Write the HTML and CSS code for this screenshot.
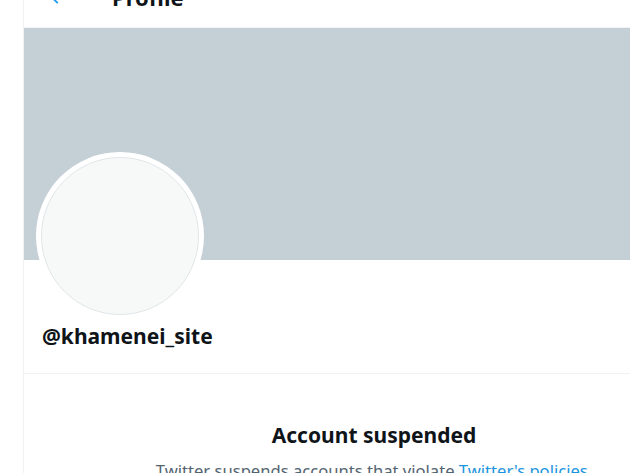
FILE: index.html
```html
<!DOCTYPE html>
<html>
<head>
<meta charset="utf-8">
<link rel="stylesheet" href="styles.css">
</head>
<body>
<div class="page">
  <div class="gutter"></div>
  <main class="column">
    <header class="header">
      <div class="header-inner">
        <div class="back">
          <svg viewBox="0 0 24 24" width="22" height="22"><path fill="#1d9bf0" d="M7.414 13l5.043 5.04-1.414 1.42L3.586 12l7.457-7.46 1.414 1.42L7.414 11H21v2H7.414z"/></svg>
        </div>
        <h2 class="title">Profile</h2>
      </div>
    </header>
    <div class="banner"></div>
    <div class="profile">
      <div class="avatar"><div class="avatar-img"></div></div>
      <div class="handle">@khamenei_site</div>
    </div>
    <section class="empty">
      <h1 class="empty-title">Account suspended</h1>
      <p class="empty-text">Twitter suspends accounts that violate <a href="#">Twitter's policies</a>. <a href="#">Learn more</a></p>
    </section>
  </main>
</div>
</body>
</html>
```
FILE: styles.css
```css
html, body {
  margin: 0;
  padding: 0;
  overflow: hidden;
  background: #ffffff;
}
body {
  font-family: "Noto Sans", "Open Sans", sans-serif;
  color: #0f1419;
}
.page {
  display: flex;
  width: 630px;
  height: 473px;
  overflow: hidden;
}
.gutter {
  flex: 0 0 23px;
}
.column {
  flex: 0 0 700px;
  border-left: 1px solid #eff3f4;
}
.header {
  height: 27px;
  border-bottom: 1px solid #eff3f4;
  overflow: hidden;
}
.header-inner {
  display: flex;
  align-items: center;
  height: 53px;
  margin-top: -30px;
  padding-left: 16px;
}
.back {
  width: 56px;
  display: flex;
  align-items: center;
  padding-left: 7px;
}
.title {
  margin: 0 0 0 9px;
  font-size: 22px;
  font-weight: 700;
}
.banner {
  height: 232px;
  background: #c4cfd6;
}
.profile {
  display: flex;
  flex-direction: column;
  padding: 0 12px;
  height: 113px;
  border-bottom: 1px solid #eff3f4;
}
.avatar {
  flex: 0 0 auto;
  width: 168px;
  height: 168px;
  margin-top: -108px;
  border-radius: 50%;
  background: #ffffff;
  padding: 5px;
  box-sizing: border-box;
}
.avatar-img {
  width: 100%;
  height: 100%;
  border-radius: 50%;
  background: #f7f9f9;
  border: 1px solid #e1e6e9;
  box-sizing: border-box;
}
.handle {
  margin: 2px 0 0 6px;
  font-size: 21px;
  font-weight: 700;
  line-height: 28px;
}
.empty {
  display: flex;
  flex-direction: column;
  align-items: center;
  padding-top: 46px;
}
.empty-title {
  margin: 0;
  font-size: 21px;
  font-weight: 700;
  line-height: 30px;
}
.empty-text {
  margin: 10px 0 0;
  max-width: 470px;
  text-align: center;
  font-size: 16.6px;
  line-height: 22px;
  color: #536471;
}
.empty-text a {
  color: #1b95e0;
  text-decoration: none;
}
```
